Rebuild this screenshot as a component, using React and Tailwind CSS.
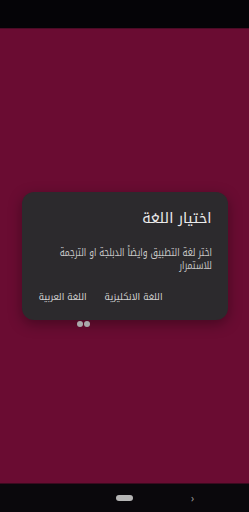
import React from "react";

export default function App() {
  return (
    <div className="h-[512px] w-[249px] flex flex-col bg-[#6a0c32] overflow-hidden" style={{ fontFamily: '"Noto Kufi Arabic", "DejaVu Sans", sans-serif' }}>
      {/* status bar */}
      <div className="h-[29px] bg-[#050407] border-b border-[#4a0c25]" />

      {/* content */}
      <main className="flex-1 flex items-center justify-center">
        <div className="relative w-[206px] rounded-[12px] bg-[#2c2a2d] pt-[13px] pb-[15px] px-[16px] shadow-[0_4px_14px_rgba(0,0,0,0.35)]" dir="rtl">
          <h2 className="text-[14.5px] leading-[26px] text-[#ececec]">اختيار اللغة</h2>
          <p className="mt-[15px] text-[11px] leading-[13px] text-[#c9c9c9] whitespace-nowrap origin-right scale-x-[0.77]">
            اختر لغة التطبيق وايضاً الدبلجة او الترجمة
            <br />
            للاستمرار
          </p>
          <div className="mt-[17px] flex gap-[18px] pr-[49px] text-[9px] leading-[16px] text-[#d4d4d4] whitespace-nowrap">
            <button>اللغة الانكليزية</button>
            <button>اللغة العربية</button>
          </div>

          {/* loading dots */}
          <div className="absolute left-[55px] -bottom-[7px] flex gap-[1px]">
            <span className="w-[6px] h-[6px] rounded-full bg-[#a9a9ab]" />
            <span className="w-[6px] h-[6px] rounded-full bg-[#a9a9ab]" />
          </div>
        </div>
      </main>

      {/* nav bar */}
      <div className="h-[29px] bg-[#0a080c] border-t border-[#3a0a1f] relative flex items-center justify-center">
        <div className="w-[17px] h-[6px] rounded-full bg-[#b5b5b5]" />
        <span className="absolute left-[191px] top-[7px] text-[10px] text-[#9a9a9a]">›</span>
      </div>
    </div>
  );
}
